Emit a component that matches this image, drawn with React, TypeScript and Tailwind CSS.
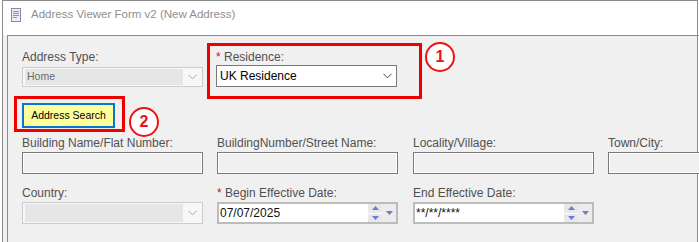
import React from 'react';

const labelCls = 'h-[14px] text-[12px] leading-[14px] text-[#505050] whitespace-nowrap';

const Chevron = ({ color }: { color: string }) => (
    <svg width="9" height="6" viewBox="0 0 9 6">
        <path d="M0.5 0.8 L4.5 4.8 L8.5 0.8" fill="none" stroke={color} strokeWidth="1" />
    </svg>
);

const Tri = ({ up }: { up?: boolean }) => (
    <svg width="7" height="4" viewBox="0 0 7 4">
        <path d={up ? 'M0 4 L3.5 0 L7 4 Z' : 'M0 0 L7 0 L3.5 4 Z'} fill="#6b7bd3" />
    </svg>
);

const DisabledCombo = ({ text, height }: { text?: string; height: string }) => (
    <div className={`flex w-[181px] ${height} border border-[#cccccc] bg-[#f7f7f7] p-[1px_0_1px_2px]`}>
        <div className="flex flex-1 items-center bg-[#e6e6e6] pl-[2px] text-[10.5px] text-[#6a6a6a]">{text}</div>
        <div className="flex w-[19px] items-center justify-center">
            <Chevron color="#a9a9a9" />
        </div>
    </div>
);

const TextBox = () => (
    <div className="h-[22px] w-[181px] border border-[#7a7a7a] bg-[#f0f0f0] shadow-[inset_0_0_0_1px_#ffffff]" />
);

const DateBox = ({ value, small }: { value: string; small?: boolean }) => (
    <div className="flex h-[22px] w-[181px] border-2 border-[#bcbcbc] bg-white">
        <div className={`flex-1 pl-[1px] text-[#111] ${small ? 'pt-[2px] text-[12px] leading-[14px]' : 'text-[12px] leading-[18px]'}`}>
            {value}
        </div>
        <div className="flex w-[14px] flex-col gap-[1px]">
            <div className="flex flex-1 items-center justify-center bg-[#e8e8e8]">
                <Tri up />
            </div>
            <div className="flex flex-1 items-center justify-center bg-[#e8e8e8]">
                <Tri />
            </div>
        </div>
        <div className="flex w-[14px] items-center justify-center bg-[#ececec]">
            <Tri />
        </div>
    </div>
);

const Callout = ({ n, className }: { n: string; className: string }) => (
    <div
        className={`absolute flex h-[30px] w-[30px] items-center justify-center rounded-full border-2 border-[#ee1111] bg-white text-[16px] font-bold text-[#ee1111] ${className}`}
    >
        {n}
    </div>
);

export default function App() {
    return (
        <div className="relative h-[242px] w-[699px] overflow-hidden bg-white font-['Liberation_Sans',Arial,sans-serif]">
            <div className="ml-[2px] flex h-full w-[696px] flex-col border-x border-t border-[#8c8c8c]">
                {/* title bar */}
                <div className="flex h-[34px] items-start gap-[10px] pl-[8px] pt-[6px]">
                    <svg width="10" height="14" viewBox="0 0 10 14" className="mt-[1px]">
                        <rect x="0.5" y="0.5" width="9" height="13" fill="#eeeef6" stroke="#8787ad" />
                        <path d="M2 3.5h6M2 5.5h6M2 7.5h6M2 9.5h4" stroke="#8f8fb3" strokeWidth="1" />
                    </svg>
                    <span className="text-[11.5px] leading-[14px] text-[#8f8f8f]">Address Viewer Form v2 (New Address)</span>
                </div>

                <div className="flex flex-1 bg-[#f0f0f0] pl-[4px]">
                    <div className="flex-1 border-l border-t border-[#8c8c8c] pl-[14px] pt-[14px]">
                        <div className="grid grid-cols-[181px_182px_181px_181px] gap-x-[14px]">
                            <div>
                                <div className={`${labelCls} mb-[3px]`}>Address Type:</div>
                                <DisabledCombo text="Home" height="h-[20px]" />
                            </div>
                            <div className="-ml-px">
                                <div className={`${labelCls} mb-[1px]`}>
                                    <span className="text-[#dd1111]">*</span> Residence:
                                </div>
                                <div className="flex h-[22px] w-[181px] items-center border border-[#7a7a7a] bg-white pl-[3px] text-[12px] text-black">
                                    <span className="flex-1">UK Residence</span>
                                    <span className="flex w-[18px] justify-center">
                                        <Chevron color="#444444" />
                                    </span>
                                </div>
                            </div>
                        </div>

                        <button className="mt-[16px] h-[25px] w-[93px] border-2 border-[#0a74d4] bg-[#ffff99] text-[10.5px] text-black">
                            Address Search
                        </button>

                        <div className="mt-[8px] grid grid-cols-[181px_182px_181px_181px] gap-x-[14px] gap-y-[12px]">
                            <div>
                                <div className={`${labelCls} mb-[2px]`}>Building Name/Flat Number:</div>
                                <TextBox />
                            </div>
                            <div>
                                <div className={`${labelCls} mb-[2px]`}>BuildingNumber/Street Name:</div>
                                <TextBox />
                            </div>
                            <div>
                                <div className={`${labelCls} mb-[2px]`}>Locality/Village:</div>
                                <TextBox />
                            </div>
                            <div>
                                <div className={`${labelCls} mb-[2px]`}>Town/City:</div>
                                <TextBox />
                            </div>

                            <div>
                                <div className={`${labelCls} mb-[2px]`}>Country:</div>
                                <DisabledCombo height="h-[22px]" />
                            </div>
                            <div>
                                <div className={`${labelCls} mb-[2px]`}>
                                    <span className="text-[#dd1111]">*</span> Begin Effective Date:
                                </div>
                                <DateBox value="07/07/2025" />
                            </div>
                            <div>
                                <div className={`${labelCls} mb-[2px]`}>End Effective Date:</div>
                                <DateBox value="**/**/****" small />
                            </div>
                        </div>
                    </div>
                </div>
            </div>

            {/* annotations */}
            <div className="absolute left-[207px] top-[43px] h-[56px] w-[215px] border-[3px] border-[#ee0000]" />
            <div className="absolute left-[14px] top-[96px] h-[36px] w-[111px] border-[3px] border-[#ee0000]" />
            <Callout n="1" className="left-[425px] top-[42px]" />
            <Callout n="2" className="left-[129px] top-[107px]" />
        </div>
    );
}
